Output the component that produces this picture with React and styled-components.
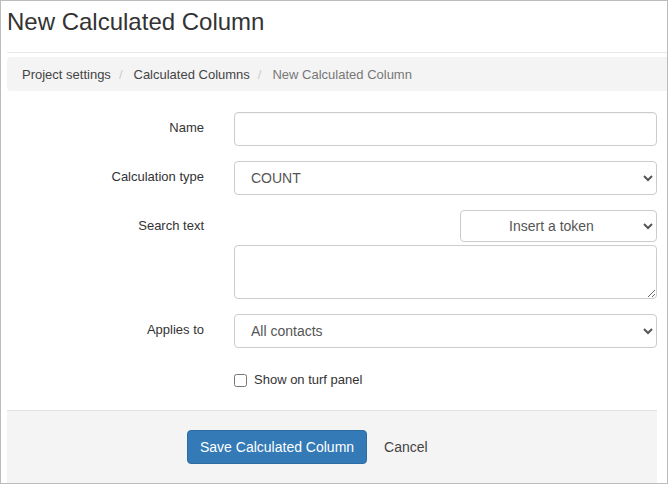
import React from 'react';
import styled, { createGlobalStyle } from 'styled-components';

const GlobalStyle = createGlobalStyle`
  html, body {
    margin: 0;
    padding: 0;
    background: #fff;
  }
  body {
    font-family: "Liberation Sans", Arial, sans-serif;
    color: #333;
  }
  * {
    box-sizing: border-box;
  }
`;

const Frame = styled.div`
  width: 668px;
  height: 484px;
  border: 1px solid #bcbcbc;
  padding: 8px 0 0 6px;
  overflow: hidden;
`;

const PageHeader = styled.div`
  height: 44px;
  border-bottom: 1px solid #e8e8e8;
`;

const Title = styled.h3`
  margin: 0;
  font-size: 24px;
  font-weight: 400;
  line-height: 26px;
  color: #333;
`;

const Breadcrumb = styled.ol`
  list-style: none;
  margin: 4px 0 21px;
  padding: 0 15px;
  height: 34px;
  display: flex;
  align-items: center;
  background: #f4f4f4;
  border-radius: 4px 0 0 4px;
  font-size: 13px;

  li + li::before {
    content: '/';
    color: #ccc;
    padding: 0 11px 0 8px;
  }
`;

const Crumb = styled.li`
  color: ${(p) => (p.$active ? '#777' : '#444')};
`;

const Form = styled.form`
  margin-right: 10px;
  display: flex;
  flex-direction: column;
  gap: 15px;
`;

const Row = styled.div`
  display: grid;
  grid-template-columns: 212px 1fr;
  column-gap: 15px;
`;

const Label = styled.label`
  text-align: right;
  padding: 9px 15px 0 0;
  font-size: 13px;
  line-height: 14px;
  color: #333;
`;

const Field = styled.div`
  display: flex;
  flex-direction: column;
  align-items: ${(p) => (p.$end ? 'flex-end' : 'stretch')};
`;

const TextInput = styled.input`
  width: 100%;
  height: 34px;
  border: 1px solid #ccc;
  border-radius: 4px;
  padding: 6px 12px;
  font-family: inherit;
  font-size: 14px;
  color: #555;
  background: #fff;
  box-shadow: inset 0 1px 1px rgba(0, 0, 0, 0.04);
`;

const Select = styled.select`
  width: ${(p) => p.$width || '100%'};
  height: ${(p) => p.$height || '34px'};
  border: 1px solid #ccc;
  border-radius: 4px;
  padding: ${(p) => (p.$center ? '6px 8px 6px 6px' : '6px 8px 6px 12px')};
  font-family: inherit;
  font-size: 14px;
  color: #555;
  background: #fff;
  text-align: ${(p) => (p.$center ? 'center' : 'left')};
  text-align-last: ${(p) => (p.$center ? 'center' : 'left')};
`;

const TextArea = styled.textarea`
  width: 100%;
  height: 54px;
  margin-top: 3px;
  border: 1px solid #ccc;
  border-radius: 4px;
  padding: 6px 12px;
  font-family: inherit;
  font-size: 14px;
  color: #555;
  resize: vertical;
`;

const CheckRow = styled.label`
  display: flex;
  align-items: center;
  gap: 7px;
  padding-top: 6px;
  height: 28px;
  align-self: flex-start;
  font-size: 13px;
  line-height: 20px;
  color: #333;

  input {
    margin: 0;
    width: 13px;
    height: 13px;
  }
`;

const Actions = styled.div`
  margin: 19px 10px 0 0;
  border-top: 1px solid #e3e3e3;
  background: #f4f4f4;
  padding: 19px 20px 20px 180px;
  display: flex;
  align-items: center;
  gap: 4px;
`;

const PrimaryButton = styled.button`
  height: 34px;
  padding: 6px 12px;
  border: 1px solid #2e6da4;
  border-radius: 4px;
  background: #337ab7;
  color: #fff;
  font-family: inherit;
  font-size: 14px;
  cursor: pointer;
`;

const LinkButton = styled.button`
  height: 34px;
  padding: 6px 12px;
  border: 1px solid transparent;
  background: transparent;
  color: #444;
  font-family: inherit;
  font-size: 14px;
  cursor: pointer;
`;

export default function App() {
  return (
    <>
      <GlobalStyle />
      <Frame>
        <PageHeader>
          <Title>New Calculated Column</Title>
        </PageHeader>
        <Breadcrumb>
          <Crumb>Project settings</Crumb>
          <Crumb>Calculated Columns</Crumb>
          <Crumb $active>New Calculated Column</Crumb>
        </Breadcrumb>
        <Form onSubmit={(e) => e.preventDefault()}>
          <Row>
            <Label>Name</Label>
            <Field>
              <TextInput type="text" />
            </Field>
          </Row>
          <Row>
            <Label>Calculation type</Label>
            <Field>
              <Select defaultValue="COUNT">
                <option>COUNT</option>
                <option>SUM</option>
              </Select>
            </Field>
          </Row>
          <Row>
            <Label>Search text</Label>
            <Field $end>
              <Select $width="197px" $height="32px" $center defaultValue="">
                <option value="">Insert a token</option>
              </Select>
              <TextArea />
            </Field>
          </Row>
          <Row>
            <Label>Applies to</Label>
            <Field>
              <Select defaultValue="all">
                <option value="all">All contacts</option>
              </Select>
            </Field>
          </Row>
          <Row>
            <span />
            <CheckRow>
              <input type="checkbox" />
              Show on turf panel
            </CheckRow>
          </Row>
        </Form>
        <Actions>
          <PrimaryButton type="button">Save Calculated Column</PrimaryButton>
          <LinkButton type="button">Cancel</LinkButton>
        </Actions>
      </Frame>
    </>
  );
}
